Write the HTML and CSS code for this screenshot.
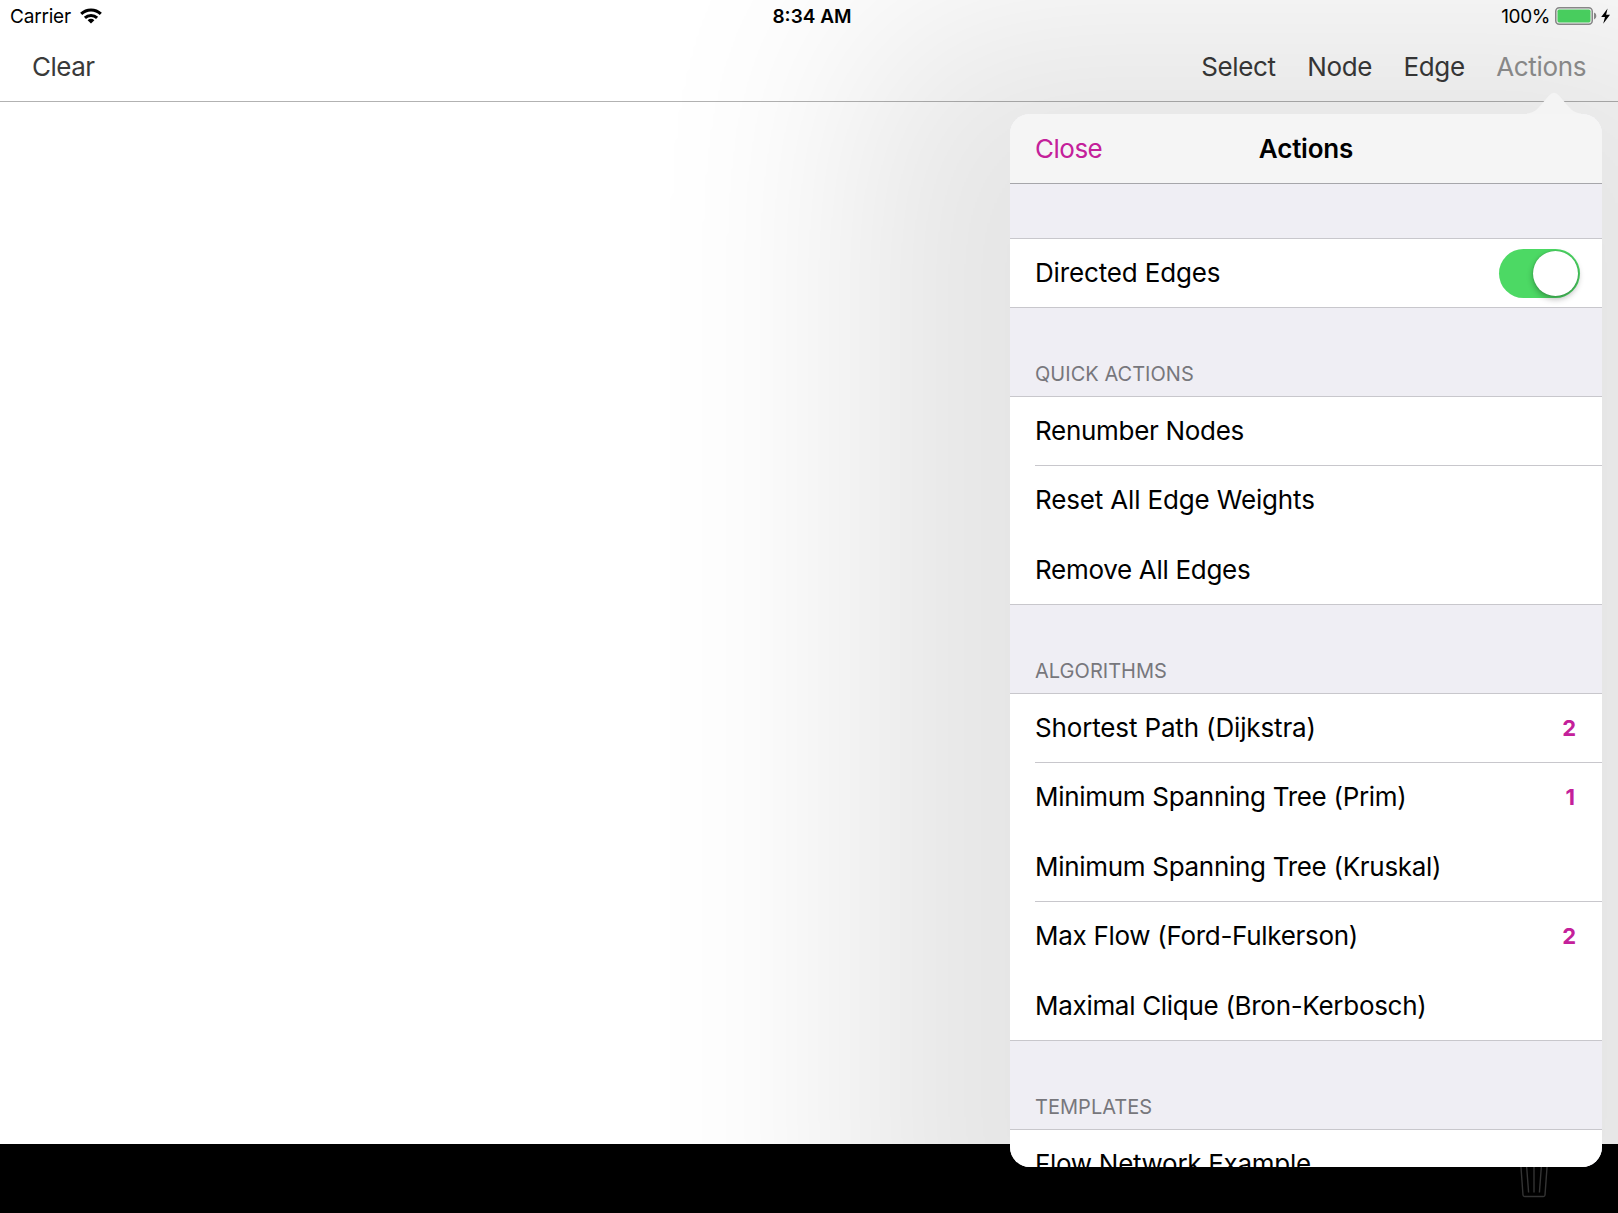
FILE: index.html
```html
<!DOCTYPE html>
<html lang="en">
<head>
<meta charset="utf-8">
<title>Graph Editor</title>
<link rel="stylesheet" href="styles.css">
</head>
<body>
<div class="app">
  <header class="top">
    <div class="status">
      <div class="status-left">
        <span class="carrier">Carrier</span>
        <svg class="wifi" width="22" height="16" viewBox="0 0 22 16">
          <g fill="none" stroke="#000" stroke-width="3">
            <path d="M1.2 5.9 A14 14 0 0 1 20.8 5.9"/>
            <path d="M4.9 9.9 A8.8 8.8 0 0 1 17.1 9.9"/>
          </g>
          <path d="M11 15.6 L7.6 12.2 A4.9 4.9 0 0 1 14.4 12.2 Z"/>
        </svg>
      </div>
      <span class="time">8:34 AM</span>
      <div class="status-right">
        <span class="percent">100%</span>
        <svg class="battery" width="56" height="18" viewBox="0 0 56 18">
          <rect x="0.75" y="0.75" width="36.5" height="16.5" rx="3.5" fill="#fafafa" stroke="#8e8e8e" stroke-width="1.5"/>
          <rect x="2.5" y="2.6" width="33" height="12.8" rx="1.6" fill="#4cd964"/>
          <path d="M39 5.6 Q41.4 6.6 41.4 9 T39 12.4 Z" fill="#8e8e8e"/>
          <path d="M52.6 1.4 L46.2 10 H50 L48.2 16.8 L55 7.8 H51.1 Z" fill="#000"/>
        </svg>
      </div>
    </div>
    <nav class="toolbar">
      <span class="clear">Clear</span>
      <div class="tools">
        <span>Select</span>
        <span>Node</span>
        <span>Edge</span>
        <span class="active">Actions</span>
      </div>
    </nav>
  </header>
  <main class="canvas"></main>
  <footer class="bottom">
    <svg class="trash" width="30" height="42" viewBox="0 0 30 42" fill="none" stroke="#3a3a3a" stroke-width="1.4">
      <path d="M1 6 H29 M10 6 V2 H20 V6"/>
      <path d="M1.6 6 L4 39 Q4.1 40.5 5.6 40.5 H24.4 Q25.9 40.5 26 39 L28.4 6"/>
      <path d="M7.6 10 L9.6 36.5 M15 10 V36.5 M22.4 10 L20.4 36.5"/>
    </svg>
  </footer>

  <section class="popover">
    <svg class="arrow" width="54" height="22" viewBox="0 0 54 22">
      <path d="M0 22 V21.4 C8 20.6 11 16.5 16 10.5 L22 3.4 Q27 -2 32 3.4 L38 10.5 C43 16.5 46 20.6 54 21.4 V22 Z" fill="#f4f4f4"/>
    </svg>
    <div class="sheet">
      <div class="sheet-bar">
        <span class="close">Close</span>
        <h1>Actions</h1>
      </div>
      <div class="content">
        <ul class="list first">
          <li class="loose"><span>Directed Edges</span><i class="switch"><b></b></i></li>
        </ul>
        <h2>QUICK ACTIONS</h2>
        <ul class="list three">
          <li class="line raised"><span>Renumber Nodes</span></li>
          <li class="loose raised"><span>Reset All Edge Weights</span></li>
          <li><span>Remove All Edges</span></li>
        </ul>
        <h2>ALGORITHMS</h2>
        <ul class="list five">
          <li class="line loose raised"><span>Shortest Path (Dijkstra)</span><em>2</em></li>
          <li class="raised"><span>Minimum Spanning Tree (Prim)</span><em class="one">1</em></li>
          <li class="line"><span>Minimum Spanning Tree (Kruskal)</span></li>
          <li><span>Max Flow (Ford-Fulkerson)</span><em>2</em></li>
          <li class="lowered"><span>Maximal Clique (Bron-Kerbosch)</span></li>
        </ul>
        <h2>TEMPLATES</h2>
        <ul class="list last">
          <li><span>Flow Network Example</span></li>
        </ul>
      </div>
    </div>
  </section>
</div>
</body>
</html>
```
FILE: styles.css
```css
* { box-sizing: border-box; margin: 0; padding: 0; }
body {
  font-family: Inter, "Liberation Sans", sans-serif;
  font-size: 26px;
  letter-spacing: -0.5px;
  color: #000;
  background: #fff;
  overflow: hidden;
}
.app {
  position: relative;
  width: 1618px;
  height: 1213px;
  display: flex;
  flex-direction: column;
  overflow: hidden;
}
.top { height: 102px; border-bottom: 1px solid #b2b2b2; }
.status {
  height: 33px;
  display: grid;
  grid-template-columns: 1fr auto 1fr;
  align-items: center;
  font-size: 19px;
  line-height: 33px;
  padding: 0 7px 0 10px;
}
.status-left, .status-right { display: flex; align-items: center; }
.status-left { gap: 9px; }
.status-right { justify-content: flex-end; gap: 5px; }
.carrier { letter-spacing: -0.2px; }
.wifi { margin-bottom: 1px; }
.battery { margin-bottom: 1px; }
.percent { letter-spacing: -0.4px; }
.time { font-weight: 600; letter-spacing: 0; padding-left: 3px; }
.toolbar {
  height: 68px;
  display: flex;
  justify-content: space-between;
  align-items: center;
  padding: 0 32px 2px 32px;
  color: #3a3a3a;
}
.tools { display: flex; gap: 31.5px; letter-spacing: -0.36px; }
.active { color: #929292; }
.canvas { flex: 1; }
.bottom {
  height: 69px;
  background: #000;
  display: flex;
  justify-content: flex-end;
  align-items: flex-start;
  padding: 12px 69px 0 0;
}
.popover {
  position: absolute;
  left: 1010px;
  top: 114px;
  width: 592px;
  height: 1053px;
  border-radius: 20px;
  box-shadow: 0 50px 215px 155px rgba(0, 0, 0, 0.107);
}
.arrow { position: absolute; left: 517px; top: -22px; }
.sheet {
  height: 100%;
  border-radius: 20px;
  overflow: hidden;
  background: #efeef4;
}
.sheet-bar {
  height: 70px;
  display: grid;
  grid-template-columns: 1fr auto 1fr;
  align-items: center;
  padding: 0 25px;
  background: #f5f5f5;
  border-bottom: 1px solid #a6a6aa;
}
.close { color: #c4209a; }
h1 { font-size: 26px; font-weight: 600; letter-spacing: -0.2px; }
.content { padding-top: 54px; }
.list {
  list-style: none;
  display: grid;
  grid-auto-rows: 1fr;
  background: #fff;
  border-top: 1px solid #c8c7cc;
  border-bottom: 1px solid #c8c7cc;
  letter-spacing: -0.3px;
}
.first { height: 70px; }
.three { height: 209px; }
.five { height: 348px; }
.last { height: 70px; }
.list li {
  display: flex;
  align-items: center;
  justify-content: space-between;
  margin-left: 25px;
  padding-right: 26px;
  border-bottom: 1px solid transparent;
}
.list .line { border-bottom-color: #c8c7cc; }
.list .loose { letter-spacing: -0.15px; }
.raised span { padding-bottom: 2px; }
.lowered span { padding-top: 2px; }
.list em {
  font-style: normal;
  font-weight: 700;
  font-size: 22px;
  letter-spacing: 0;
  color: #c4209a;
}
.list .one { padding-right: 1px; }
h2 {
  height: 88px;
  padding: 52px 25px 0;
  font-size: 20px;
  line-height: 28px;
  font-weight: 400;
  letter-spacing: 0.03px;
  color: #77777c;
}
.switch {
  width: 81px;
  height: 49px;
  position: relative;
  top: 1px;
  margin-right: -4px;
  padding: 2px;
  border-radius: 25px;
  background: #4cd964;
  display: flex;
  justify-content: flex-end;
}
.switch b {
  width: 45px;
  height: 45px;
  border-radius: 50%;
  background: #fff;
  box-shadow: 0 3px 6px rgba(0, 0, 0, 0.3), 0 0 2px rgba(0, 0, 0, 0.2);
}
```
